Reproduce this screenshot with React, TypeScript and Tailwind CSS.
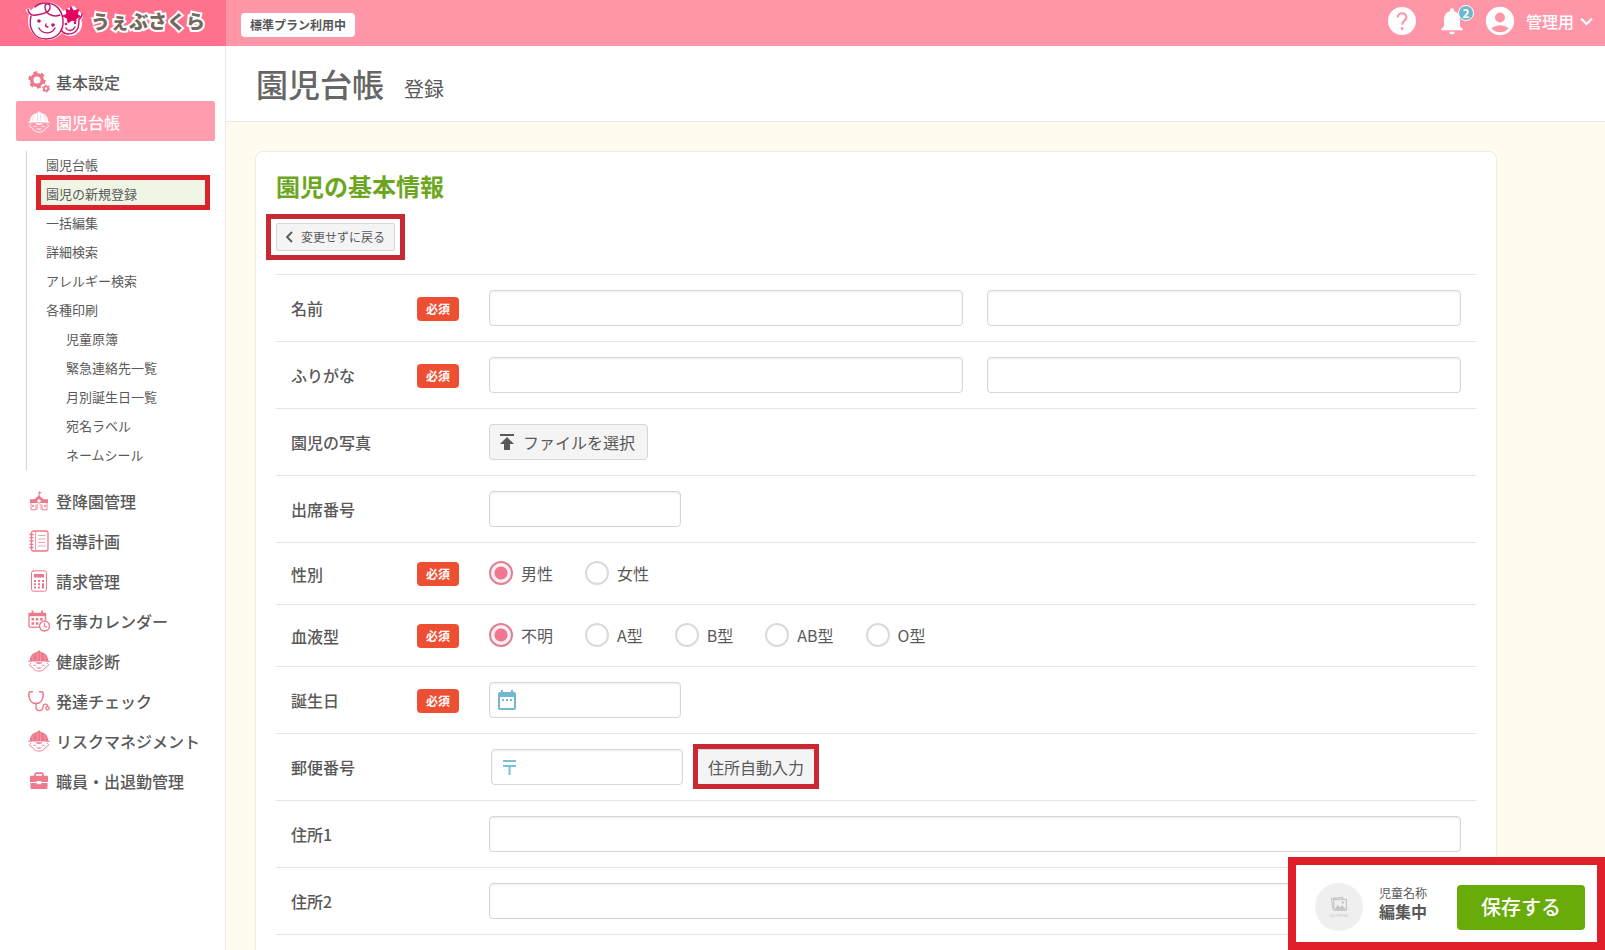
import { useState } from 'react';
import type { ReactNode } from 'react';
import { MdAccountCircle, MdDateRange, MdNotifications, MdPublish } from 'react-icons/md';

const PINK = '#ee788c';

function Logo() {
  return (
    <svg width="58" height="44" viewBox="0 0 58 44" fill="none" strokeLinecap="round" strokeLinejoin="round" aria-hidden="true">
      <g fill="#fff" stroke="#fff" strokeWidth="4">
        <circle cx="22" cy="21" r="17" />
        <circle cx="45" cy="24" r="10" />
        <path d="M3 10l4 5M40 12l8-4 8 8-3 6" />
      </g>
      <g stroke="#c4136b" strokeWidth="1.4">
        <path d="M6 16C3 28 9 39 21 39c11 0 18-8 17-19C37 9 30 3 21 3 17 3 13 4 10 7" />
        <path d="M3 9c0 4 3 7 8 6 8-1 15-3 14-9-1-3-5-3-5 1 0 6 7 11 15 8" />
        <path d="M36 30c4 6 14 5 17-2 1-3 1-6 1-9 2-1 3-3 3-5" />
        <path d="M14 28c3 6 12 7 16 0" />
        <path d="M41 28c2 4 7 3 9-1" />
        <path d="M21 24c-1 2 0 3 2 3" />
      </g>
      <g fill="#c4136b">
        <circle cx="14" cy="21" r="1.8" />
        <circle cx="28" cy="25" r="1.8" />
        <circle cx="41" cy="24" r="1.3" />
        <circle cx="50" cy="23" r="1.3" />
      </g>
      <path
        d="M46 7l2.500 4 5-1.500-1 5 3 2-4.500 2 0 3-4-1.500-4 3-.5-4.500-4.500-2.500 4-2-1-4.500 4 1z"
        fill="#e4005f"
        stroke="#e4005f"
        strokeWidth="1"
      />
    </svg>
  );
}

function Svg({ children }: { children: ReactNode }) {
  return (
    <svg width="22" height="22" viewBox="0 0 22 22" fill="none" className="shrink-0" strokeLinecap="round" strokeLinejoin="round" aria-hidden="true">
      {children}
    </svg>
  );
}

function GearsIcon() {
  return (
    <Svg>
      <circle cx="9" cy="9" r="5.3" stroke={PINK} strokeWidth="3.4" />
      <circle cx="9" cy="9" r="7.4" stroke={PINK} strokeWidth="2.6" strokeDasharray="3.8 3.95" strokeLinecap="butt" />
      <circle cx="18" cy="17.5" r="2.2" stroke={PINK} strokeWidth="1.8" />
      <circle cx="18" cy="17.5" r="3.4" stroke={PINK} strokeWidth="1.2" strokeDasharray="1.8 1.76" strokeLinecap="butt" />
    </Svg>
  );
}

function ChildIcon({ active = false }: { active?: boolean }) {
  const line = active ? '#fff' : PINK;
  const seam = active ? '#ffb3c0' : '#f8b9c4';
  return (
    <Svg>
      <path d="M1.800 11C1.800 5.500 5.500 1.800 11 1.800S20.200 5.500 20.200 11z" fill={line} />
      <rect x="9.500" y=".6" width="3" height="2" rx="1" fill={line} />
      <path d="M.8 11.300C4 10.300 18 10.300 21.200 11.300" stroke={line} strokeWidth="1.200" />
      <path d="M9.500 3v7M12.500 3v7M6 4.500C5 6 4.600 8 4.600 10M16 4.500C17 6 17.400 8 17.400 10" stroke={seam} strokeWidth=".5" />
      <path d="M2.800 13.200c-2 .4-1.800 3 .8 3.300C5.500 19.600 8 21.200 11 21.200s5.500-1.600 7.400-4.700c2.600-.3 2.800-2.900.8-3.300" stroke={line} strokeWidth=".9" />
      <path d="M7.500 12.300h7c-.8 2.200-6.200 2.200-7 0z" fill={line} />
      <path d="M8.200 17.400c1.500 1.700 4.100 1.700 5.600 0z" fill={line} />
      <path d="M6 15.300h1.800M14.200 15.300H16" stroke={line} strokeWidth=".9" />
    </Svg>
  );
}

function SchoolIcon() {
  return (
    <Svg>
      <path d="M11 6V2" stroke={PINK} strokeWidth="1" />
      <path d="M11 1.500l3 1.300-3 1.300z" fill={PINK} />
      <path d="M11 5.200l4.500 4H20V13H2V9.200h4.500z" fill={PINK} />
      <path d="M3 13.500v6.200h5V15M19 13.500v6.200h-5V15" stroke={PINK} strokeWidth=".9" />
      <path d="M5 15v2M17 15v2" stroke={PINK} strokeWidth="1.600" strokeLinecap="butt" />
      <circle cx="11" cy="11" r="1.700" fill="#fff" />
      <path d="M9 19.500V15l2-1.500 2 1.500v4.500" stroke={PINK} strokeWidth=".7" />
    </Svg>
  );
}

function NotebookIcon() {
  return (
    <Svg>
      <rect x="3.500" y="1" width="16.500" height="20" rx="2" stroke={PINK} strokeWidth="1.300" />
      <path d="M7.500 1.500v19" stroke={PINK} strokeWidth=".8" />
      <path d="M2 4.500h3M2 7.700h3M2 11h3M2 14.300h3M2 17.500h3" stroke={PINK} strokeWidth="1.300" />
      <path d="M10.500 5.500h6.500M10.500 9h6.500M10.500 12.500h6.500M10.500 16h6.500" stroke={PINK} strokeWidth=".7" />
    </Svg>
  );
}

function CalculatorIcon() {
  return (
    <Svg>
      <rect x="3.500" y=".8" width="15" height="20.400" rx="2" stroke={PINK} strokeWidth="1" />
      <path d="M6 4h10v3.500H6zM6 10h2v2H6zM10 10h2v2h-2zM14 10h2v2h-2zM6 13.200h2v2H6zM10 13.200h2v2h-2zM14 13.200h2v5.200h-2zM6 16.400h2v2H6zM10 16.400h2v2h-2z" fill={PINK} />
    </Svg>
  );
}

function CalendarClockIcon() {
  return (
    <Svg>
      <path d="M11.500 17.200H2.200a1.200 1.200 0 0 1-1.200-1.200V3.500h16.500v6.500" stroke={PINK} strokeWidth="1.300" />
      <path d="M1 3h16.500v3.200H1z" fill={PINK} />
      <path d="M4.500 1v3M14 1v3" stroke={PINK} strokeWidth="1.700" />
      <path d="M3.500 8h2.600v2.400H3.500zM7.800 8h2.600v2.400H7.800zM12.100 8h2.600v2.400h-2.600zM3.500 12.200h2.600v2.600H3.500zM7.800 12.200h2.600v2.600H7.800z" fill={PINK} />
      <circle cx="16.500" cy="16" r="5" fill="#fff" stroke={PINK} strokeWidth="1.300" />
      <path d="M16.500 13.300v3l2.200.8" stroke={PINK} strokeWidth="1.200" />
    </Svg>
  );
}

function StethoscopeIcon() {
  return (
    <Svg>
      <path d="M4.300 1.700H2.500C1 1.700.8 3 .8 4.500.8 10 3.500 13.500 8 13.500s7.200-3.500 7.200-9c0-1.500-.2-2.800-1.700-2.800h-1.800" stroke={PINK} strokeWidth="1.600" />
      <path d="M8 13.500v3.500c0 4.800 7 5 7 0 0-3.800 4.200-3.500 4.800-1" stroke={PINK} strokeWidth="1.400" />
      <circle cx="19.500" cy="18.300" r="1.700" stroke={PINK} strokeWidth="1.300" />
    </Svg>
  );
}

function BriefcaseIcon() {
  return (
    <Svg>
      <path d="M7 7V4.500c0-.8.500-1.300 1.300-1.300h5.400c.8 0 1.300.5 1.300 1.300V7" stroke={PINK} strokeWidth="1.700" />
      <path d="M3.300 5.800h15.400c.8 0 1.300.5 1.300 1.300v5h-6.800v-1.200H8.800v1.200H2v-5c0-.8.500-1.300 1.300-1.300zM2.500 12.900h6.300v1.300h4.400v-1.300h6.300v4.800c0 .8-.5 1.300-1.300 1.300H3.800c-.8 0-1.300-.5-1.300-1.300z" fill={PINK} />
    </Svg>
  );
}

function NoImageIcon() {
  return (
    <svg width="18" height="16" viewBox="0 0 20 17" fill="none" aria-hidden="true">
      <path d="M4.500 13H3L1.500 2.500 14 1.200l.3 2" stroke="#c4c4c4" strokeWidth="1.200" />
      <rect x="4.200" y="3.500" width="14" height="12" stroke="#c4c4c4" strokeWidth="1.300" />
      <path d="M5 14.800l3.500-5.500 2.500 3 2.500-2.500 4.200 5z" fill="#c4c4c4" />
      <circle cx="14.200" cy="6.800" r="1.300" fill="#c4c4c4" />
    </svg>
  );
}

// red frame laid over the controls explained in the manual
function Frame({ className }: { className: string }) {
  return <span className={`pointer-events-none absolute border-5 ${className}`} />;
}

const subMenu = [
  { label: '園児台帳' },
  { label: '園児の新規登録', current: true },
  { label: '一括編集' },
  { label: '詳細検索' },
  { label: 'アレルギー検索' },
  { label: '各種印刷' },
  { label: '児童原簿', nested: true },
  { label: '緊急連絡先一覧', nested: true },
  { label: '月別誕生日一覧', nested: true },
  { label: '宛名ラベル', nested: true },
  { label: 'ネームシール', nested: true },
];

const menu = [
  { label: '登降園管理', icon: <SchoolIcon /> },
  { label: '指導計画', icon: <NotebookIcon /> },
  { label: '請求管理', icon: <CalculatorIcon /> },
  { label: '行事カレンダー', icon: <CalendarClockIcon /> },
  { label: '健康診断', icon: <ChildIcon /> },
  { label: '発達チェック', icon: <StethoscopeIcon /> },
  { label: 'リスクマネジメント', icon: <ChildIcon /> },
  { label: '職員・出退勤管理', icon: <BriefcaseIcon /> },
];

function MenuItem({ label, icon, active = false }: { label: string; icon: ReactNode; active?: boolean }) {
  return (
    <a
      href="#"
      className={`flex h-10 items-center gap-[6px] rounded-xs pt-px pl-3 font-medium ${active ? 'bg-[#ff9cae] text-white' : ''}`}
    >
      {icon}
      {label}
    </a>
  );
}

function Sidebar() {
  return (
    <nav className="w-[226px] shrink-0 border-r border-[#e8e8e8] bg-white pt-[15px] pr-[10px] pl-4">
      <MenuItem label="基本設定" icon={<GearsIcon />} />
      <MenuItem label="園児台帳" icon={<ChildIcon active />} active />
      <ul className="my-[10px] ml-[10px] border-l border-[#d4d4d4] pr-[5px] pl-[9px] text-[13px]">
        {subMenu.map((item) => (
          <li key={item.label}>
            <a
              href="#"
              className={`relative flex h-[29px] items-center pb-[2px] ${item.nested ? 'pl-[30px]' : 'pl-[10px]'} ${item.current ? 'bg-[#eff6e5]' : ''}`}
            >
              {item.label}
              {item.current && <Frame className="-top-[5px] right-0 -bottom-px left-0 border-[#dc232c]" />}
            </a>
          </li>
        ))}
      </ul>
      {menu.map((item) => (
        <MenuItem key={item.label} label={item.label} icon={item.icon} />
      ))}
    </nav>
  );
}

function Header() {
  return (
    <header className="flex h-[46px] shrink-0 bg-[#ff96a8]">
      <a href="#" className="flex w-[226px] shrink-0 items-start bg-[#ff718c] pl-[25px]">
        <Logo />
        <span className="ml-2 text-[19px] leading-[42px] font-black text-[#75685f] [-webkit-text-stroke:4px_#fff] [paint-order:stroke_fill]">
          うぇぶさくら
        </span>
      </a>
      <div className="flex flex-1 items-center justify-between pr-3 pl-[15px]">
        <span className="mt-[3px] rounded-sm bg-white px-[9px] text-xs leading-6 font-bold text-[#555]">標準プラン利用中</span>
        <div className="mb-1 flex items-center text-white">
          <button type="button" aria-label="ヘルプ">
            <svg width="28" height="28" viewBox="0 0 28 28" fill="none" aria-hidden="true">
              <circle cx="14" cy="14" r="14" fill="#fff" />
              <path d="M9.800 10.500c0-5.600 8.600-5.600 8.600-.2 0 3.400-4.200 3.400-4.200 7.400" stroke="#ff96a8" strokeWidth="2.200" />
              <circle cx="14.100" cy="21.500" r="1.500" fill="#ff96a8" />
            </svg>
          </button>
          <button type="button" aria-label="お知らせ" className="relative ml-5">
            <MdNotifications size={32} />
            <span className="absolute top-0 left-[22px] flex size-4 items-center justify-center rounded-full border border-white bg-[#6cb8ce] text-xs font-bold">
              2
            </span>
          </button>
          <button type="button" className="ml-[15px] flex items-center font-medium">
            <MdAccountCircle size={34} />
            <span className="mr-[6px] ml-[9px]">管理用</span>
            <svg width="13" height="9" viewBox="0 0 13 9" fill="none" stroke="currentColor" strokeWidth="2" aria-hidden="true">
              <path d="M1 1.500l5.500 5.500L12 1.500" />
            </svg>
          </button>
        </div>
      </div>
    </header>
  );
}

function Row({ label, id, required = false, children }: { label: string; id: string; required?: boolean; children: ReactNode }) {
  return (
    <div className="flex items-center border-t border-[#e6e6e6] p-[15px]">
      <div className="flex w-[198px] shrink-0 items-center">
        <label htmlFor={id} className="w-[126px] font-medium">
          {label}
        </label>
        {required && (
          <span className="mt-px rounded-sm bg-[#ee4f33] px-[9px] text-xs leading-6 font-bold text-white">必須</span>
        )}
      </div>
      <div className="flex flex-1 items-center">{children}</div>
    </div>
  );
}

const field = 'h-9 rounded-sm border border-[#d6d6d6] bg-white px-3 shadow-[inset_0_1px_2px_rgba(0,0,0,0.08)] outline-none';
const grayButton = 'flex items-center border border-[#d6d6d6] bg-[#f4f4f4]';

function Radios({ name, options }: { name: string; options: string[] }) {
  const [value, setValue] = useState(options[0]);
  return (
    <div className="flex h-[31px] items-center gap-8 pb-px">
      {options.map((option, i) => (
        <label key={option} className="flex items-center gap-2">
          <input
            type="radio"
            id={i === 0 ? name : undefined}
            name={name}
            checked={value === option}
            onChange={() => setValue(option)}
            className="size-6 appearance-none rounded-full border-2 border-[#dadada] bg-white checked:border-[#dd8296] checked:bg-[radial-gradient(circle,#f0778f_6px,#fdeff3_7px)]"
          />
          {option}
        </label>
      ))}
    </div>
  );
}

function ChildForm() {
  return (
    <form className="mr-[108px] rounded-lg border border-[#eeebdf] bg-white px-5 pt-4 pb-24">
      <h2 className="text-2xl leading-9 font-bold text-[#6ca61f]">園児の基本情報</h2>
      <div className="mt-[19px] mb-[23px] flex">
        <div className="relative">
          <button type="button" className={`${grayButton} h-7 gap-2 rounded-xs pr-[9px] pl-2 text-xs`}>
            <svg width="8" height="12" viewBox="0 0 8 12" fill="none" stroke="currentColor" strokeWidth="1.800" aria-hidden="true">
              <path d="M7 1L2 6l5 5" />
            </svg>
            変更せずに戻る
          </button>
          <Frame className="-inset-x-[10px] -inset-y-[9px] border-[#c62a34]" />
        </div>
      </div>
      <div className="border-b border-[#e6e6e6]">
        <Row label="名前" id="name" required>
          <div className="grid flex-1 grid-cols-2 gap-6">
            <input id="name" type="text" aria-label="姓" className={field} />
            <input type="text" aria-label="名" className={field} />
          </div>
        </Row>
        <Row label="ふりがな" id="kana" required>
          <div className="grid flex-1 grid-cols-2 gap-6">
            <input id="kana" type="text" aria-label="せい" className={field} />
            <input type="text" aria-label="めい" className={field} />
          </div>
        </Row>
        <Row label="園児の写真" id="photo">
          <button id="photo" type="button" className={`${grayButton} h-9 gap-1 rounded-sm px-[5px] pr-3`}>
            <MdPublish size={24} />
            ファイルを選択
          </button>
        </Row>
        <Row label="出席番号" id="number">
          <input id="number" type="text" className={`${field} w-48`} />
        </Row>
        <Row label="性別" id="sex" required>
          <Radios name="sex" options={['男性', '女性']} />
        </Row>
        <Row label="血液型" id="blood" required>
          <Radios name="blood" options={['不明', 'A型', 'B型', 'AB型', 'O型']} />
        </Row>
        <Row label="誕生日" id="birthday" required>
          <div className="relative">
            <input id="birthday" type="text" className={`${field} w-48 pl-10`} />
            <MdDateRange size={24} className="absolute top-[6px] left-[6px] text-[#72b8cf]" />
          </div>
        </Row>
        <Row label="郵便番号" id="zip">
          <div className="relative ml-[2px]">
            <input id="zip" type="text" className={`${field} w-48 pl-10`} />
            <svg width="13" height="15" viewBox="0 0 13 15" fill="none" stroke="#7cbfdd" strokeWidth="2" className="absolute top-[11px] left-3" aria-hidden="true">
              <path d="M0 1h13M0 6h13M6.500 6v9" />
            </svg>
          </div>
          <div className="relative ml-[14px]">
            <button type="button" className={`${grayButton} h-9 rounded-sm px-[10px]`}>
              住所自動入力
            </button>
            <Frame className="-inset-x-1 -top-[5px] -bottom-1 border-[#cc2831]" />
          </div>
        </Row>
        <Row label="住所1" id="address1">
          <input id="address1" type="text" className={`${field} flex-1`} />
        </Row>
        <Row label="住所2" id="address2">
          <input id="address2" type="text" className={`${field} flex-1`} />
        </Row>
      </div>
    </form>
  );
}

function SaveBar() {
  return (
    <div className="fixed right-0 bottom-0 flex items-center border-8 border-[#e01f28] bg-white pt-[18px] pr-3 pb-[11px] pl-[19px]">
      <div className="flex size-12 flex-col items-center justify-center rounded-full bg-[#efefef]">
        <NoImageIcon />
        <span className="text-[4px] leading-[6px] text-[#c4c4c4]">NO IMAGE</span>
      </div>
      <div className="mr-[30px] mb-2 ml-4">
        <p className="text-xs leading-4">児童名称</p>
        <p className="leading-5 font-bold">編集中</p>
      </div>
      <button type="button" className="h-[45px] rounded-sm bg-[#69ab09] px-6 text-xl font-medium text-white">
        保存する
      </button>
    </div>
  );
}

export default function App() {
  return (
    <div className="flex h-screen flex-col overflow-hidden font-['Noto_Sans_CJK_JP',sans-serif] text-base text-[#595959]">
      <Header />
      <div className="flex min-h-0 flex-1">
        <Sidebar />
        <main className="min-w-0 flex-1 overflow-y-auto bg-[#fffbee] [scrollbar-width:none]">
          <div className="flex h-[76px] items-baseline gap-5 border-b border-[#e8e8e8] bg-white px-[30px] pt-[13px]">
            <h1 className="text-[32px] leading-12 font-medium text-[#666]">園児台帳</h1>
            <p className="text-xl">登録</p>
          </div>
          <div className="pt-[29px] pb-24 pl-[29px]">
            <ChildForm />
          </div>
        </main>
      </div>
      <SaveBar />
    </div>
  );
}
